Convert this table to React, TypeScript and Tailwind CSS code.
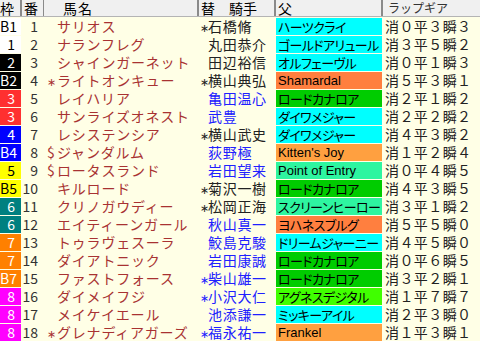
import React from 'react';

// 枠 colours
const frameStyle: Record<string, string> = {
  '1': 'bg-white text-black',
  '2': 'bg-black text-white',
  '3': 'bg-[#ff3030] text-white',
  '4': 'bg-[#0000ff] text-white',
  '5': 'bg-[#ffff00] text-black',
  '6': 'bg-[#008080] text-white',
  '7': 'bg-[#ff8000] text-white',
  '8': 'bg-[#ff00ff] text-white',
};

const sireStyle: Record<string, string> = {
  cyan: 'bg-[#00ffff]',
  orangeR: 'bg-[#ff7f3f]',
  orangeL: 'bg-[#ffa040]',
  green: 'bg-[#00cc00]',
  mint: 'bg-[#2ef5a0]',
  lime: 'bg-[#40ff00]',
};

type Row = {
  f: string;
  n: number;
  pre?: string;
  name: string;
  jp?: boolean;
  j: string;
  blue: boolean;
  sire: string;
  sc: string;
  lap: number[];
};

const rows: Row[] = [
  { f: 'B1', n: 1, name: 'サリオス', jp: true, j: '石橋脩', blue: false, sire: 'ハーツクライ', sc: 'cyan', lap: [0, 3, 3] },
  { f: '1', n: 2, name: 'ナランフレグ', j: '丸田恭介', blue: false, sire: 'ゴールドアリュール', sc: 'cyan', lap: [3, 5, 2] },
  { f: '2', n: 3, name: 'シャインガーネット', j: '田辺裕信', blue: false, sire: 'オルフェーヴル', sc: 'cyan', lap: [0, 1, 3] },
  { f: 'B2', n: 4, pre: '*', name: 'ライトオンキュー', jp: true, j: '横山典弘', blue: false, sire: 'Shamardal', sc: 'orangeR', lap: [5, 3, 1] },
  { f: '3', n: 5, name: 'レイハリア', j: '亀田温心', blue: true, sire: 'ロードカナロア', sc: 'green', lap: [2, 1, 2] },
  { f: '3', n: 6, name: 'サンライズオネスト', j: '武豊', blue: true, sire: 'ダイワメジャー', sc: 'cyan', lap: [2, 2, 2] },
  { f: '4', n: 7, name: 'レシステンシア', jp: true, j: '横山武史', blue: false, sire: 'ダイワメジャー', sc: 'cyan', lap: [4, 3, 2] },
  { f: 'B4', n: 8, pre: '$', name: 'ジャンダルム', j: '荻野極', blue: true, sire: "Kitten's Joy", sc: 'orangeL', lap: [1, 2, 4] },
  { f: '5', n: 9, pre: '$', name: 'ロータスランド', j: '岩田望来', blue: true, sire: 'Point of Entry', sc: 'mint', lap: [0, 4, 5] },
  { f: 'B5', n: 10, name: 'キルロード', jp: true, j: '菊沢一樹', blue: false, sire: 'ロードカナロア', sc: 'green', lap: [4, 3, 5] },
  { f: '6', n: 11, name: 'クリノガウディー', jp: true, j: '松岡正海', blue: false, sire: 'スクリーンヒーロー', sc: 'mint', lap: [3, 1, 2] },
  { f: '6', n: 12, name: 'エイティーンガール', j: '秋山真一', blue: true, sire: 'ヨハネスブルグ', sc: 'orangeR', lap: [5, 5, 0] },
  { f: '7', n: 13, name: 'トゥラヴェスーラ', j: '鮫島克駿', blue: true, sire: 'ドリームジャーニー', sc: 'cyan', lap: [4, 5, 0] },
  { f: '7', n: 14, name: 'ダイアトニック', j: '岩田康誠', blue: true, sire: 'ロードカナロア', sc: 'green', lap: [0, 6, 5] },
  { f: 'B7', n: 15, name: 'ファストフォース', jp: true, j: '柴山雄一', blue: true, sire: 'ロードカナロア', sc: 'green', lap: [3, 2, 1] },
  { f: '8', n: 16, name: 'ダイメイフジ', jp: true, j: '小沢大仁', blue: true, sire: 'アグネスデジタル', sc: 'lime', lap: [1, 7, 7] },
  { f: '8', n: 17, name: 'メイケイエール', j: '池添謙一', blue: true, sire: 'ミッキーアイル', sc: 'cyan', lap: [2, 3, 0] },
  { f: '8', n: 18, pre: '*', name: 'グレナディアガーズ', jp: true, j: '福永祐一', blue: true, sire: 'Frankel', sc: 'orangeL', lap: [1, 3, 1] },
];

const fw = '０１２３４５６７８９';

const Star = () => (
  <span className="font-['DejaVu_Sans',sans-serif] text-[11px]">∗</span>
);

export default function App() {
  return (
    <div className="w-[480px] h-[341px] overflow-hidden bg-[#ffffe6] font-['Noto_Sans_CJK_JP',sans-serif] text-[14px] leading-[17px]">
      {/* header */}
      <div className="flex h-[17px] bg-[#f0f0f0] border-b border-[#b4b4b4] text-black text-[14px] leading-[16px]">
        <div className="w-[22px] border-r-2 border-[#8a8a8a]">枠</div>
        <div className="w-[22px] pl-[2px] border-r border-[#8a8a8a]">番</div>
        <div className="w-[155px] pl-[19px] border-r-2 border-[#8a8a8a] tracking-[1px]">馬名</div>
        <div className="w-[77px] pl-[2px] border-r-2 border-[#8a8a8a] whitespace-pre">替　騎手</div>
        <div className="w-[107px] pl-[2px] border-r-2 border-[#8a8a8a]">父</div>
        <div className="flex-1 pl-[5px] text-[12px] text-[#333]">ラップギア</div>
      </div>

      {rows.map((r) => {
        const fc = r.f.slice(-1);
        const latin = /^[A-Za-z]/.test(r.sire);
        return (
          <div key={r.n} className="flex h-[18px] pt-px">
            <div className={`w-[21px] h-[17px] text-right pr-[6px] ${frameStyle[fc]}`}>{r.f}</div>
            <div className="w-[23px] h-[17px] text-right pr-[6px] text-[#333]">{r.n}</div>
            <div className="w-[155px] h-[17px] flex text-[#a83232] whitespace-nowrap">
              <span className="w-[13px] pl-[3px]">{r.pre === '*' ? <Star /> : r.pre}</span>
              <span className="tracking-[0.8px]">{r.name}</span>
            </div>
            <div className={`w-[77px] h-[17px] flex whitespace-nowrap ${r.blue ? 'text-[#2020ff]' : 'text-[#222]'}`}>
              <span className="w-[9px] pl-[1px]">{r.jp ? <Star /> : null}</span>
              <span className="tracking-[0.7px]">{r.j}</span>
            </div>
            <div
              className={`w-[106px] h-[17px] pl-[2px] text-black whitespace-nowrap overflow-hidden ${sireStyle[r.sc]} ${
                latin ? "font-['Liberation_Sans',sans-serif] text-[13px]" : "text-[13px] [font-feature-settings:'palt'] tracking-[-0.6px]"
              }`}
            >
              {r.sire}
            </div>
            <div className="flex-1 h-[17px] pl-[3px] text-[#222] tracking-[0.4px] whitespace-nowrap">
              消{fw[r.lap[0]]}平{fw[r.lap[1]]}瞬{fw[r.lap[2]]}
            </div>
          </div>
        );
      })}
    </div>
  );
}
